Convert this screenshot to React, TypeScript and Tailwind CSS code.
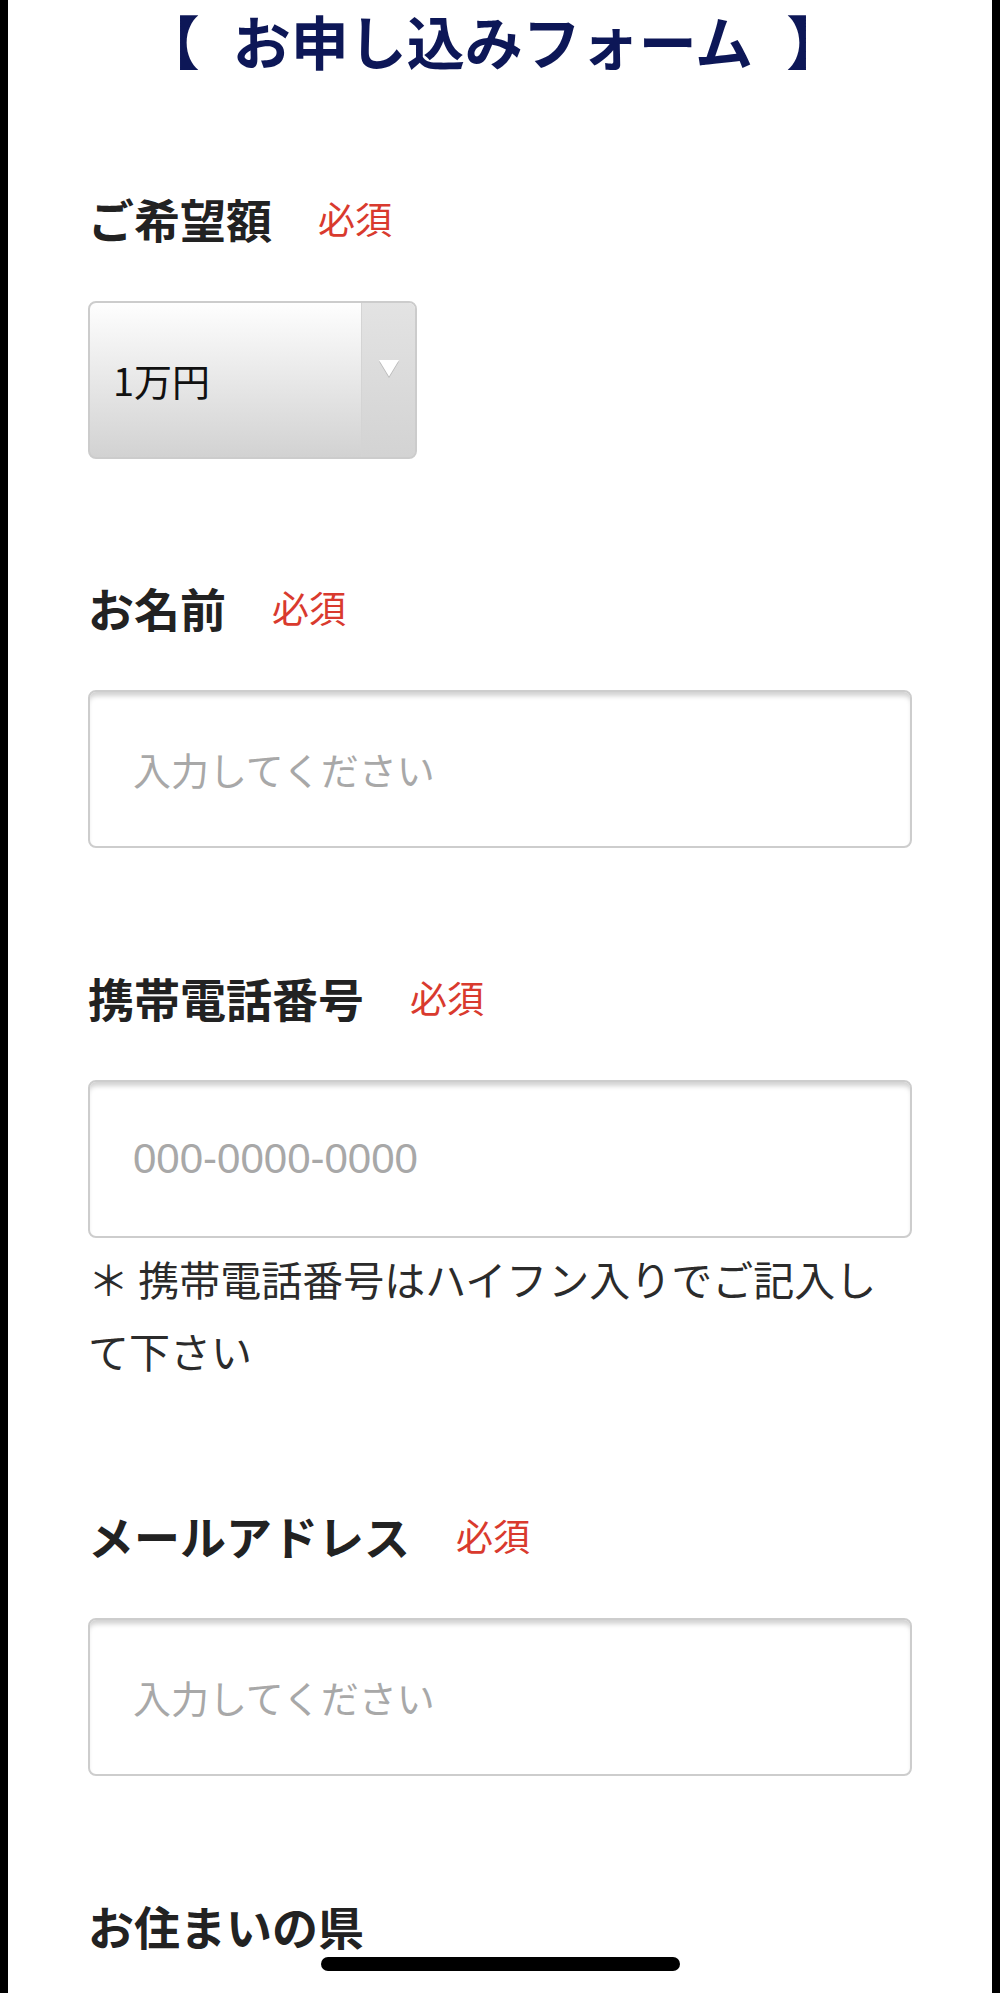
import React from "react";

function Label({ text, required = true, className = "" }: { text: string; required?: boolean; className?: string }) {
  return (
    <div className={`flex h-[60px] items-center ${className}`}>
      <span className="text-[46px] font-bold leading-none text-[#222222]">{text}</span>
      {required && (
        <span className="ml-[46px] text-[37px] leading-none text-[#d93a2e]">必須</span>
      )}
    </div>
  );
}

function TextBox({ placeholder, mono = false }: { placeholder: string; mono?: boolean }) {
  return (
    <div className="mt-[53px] flex h-[158px] items-center rounded-[8px] border-2 border-[#cdcdcd] bg-white pl-[43px] shadow-[inset_0_6px_5px_-2px_rgba(0,0,0,0.18)]">
      {mono ? (
        <span className="font-['Liberation_Sans',sans-serif] text-[42px] leading-none text-[#a8a8a8]">{placeholder}</span>
      ) : (
        <span className="text-[38px] leading-none text-[#a8a8a8]">{placeholder}</span>
      )}
    </div>
  );
}

export default function App() {
  return (
    <div className="flex min-h-[1993px] w-[1000px] bg-black">
      <div className="relative ml-[8px] w-[984px] bg-white px-[80px] font-['Noto_Sans_CJK_JP',sans-serif]">
        <h1 className="flex h-[76px] items-start justify-center pr-[14px] text-[58px] font-bold leading-[80px] text-[#0d1757]">
          <span>【</span>
          <span className="mx-[33px]">お申し込みフォーム</span>
          <span>】</span>
        </h1>

        <Label text="ご希望額" className="mt-[112px]" />
        <div className="mt-[53px] flex h-[158px] w-[329px] overflow-hidden rounded-[8px] border-2 border-[#cccccc] bg-linear-to-b from-[#fefefe] to-[#d2d2d2]">
          <div className="flex flex-1 items-center pl-[23px] text-[38px] leading-none text-[#111111]">1万円</div>
          <div className="flex w-[54px] justify-center border-l border-[#d4d4d4] bg-linear-to-b from-[#e3e3e3] to-[#d3d3d3] pt-[56px]">
            <svg width="22" height="20" viewBox="0 0 22 20">
              <path d="M1 2.5 H21 L11 19 Z" fill="#b9b9b9" />
              <path d="M1 1 H21 L11 17.5 Z" fill="#ffffff" />
            </svg>
          </div>
        </div>

        <Label text="お名前" className="mt-[118px]" />
        <TextBox placeholder="入力してください" />

        <Label text="携帯電話番号" className="mt-[119px]" />
        <TextBox placeholder="000-0000-0000" mono />
        <p className="mt-[4px] text-[41px] leading-[72px] text-[#2b2b2b]">
          ＊ 携帯電話番号はハイフン入りでご記入して下さい
        </p>

        <Label text="メールアドレス" className="mt-[119px]" />
        <TextBox placeholder="入力してください" />

        <Label text="お住まいの県" required={false} className="mt-[119px]" />

        <div className="absolute bottom-[22px] left-[313px] h-[14px] w-[359px] rounded-full bg-black" />
      </div>
    </div>
  );
}
